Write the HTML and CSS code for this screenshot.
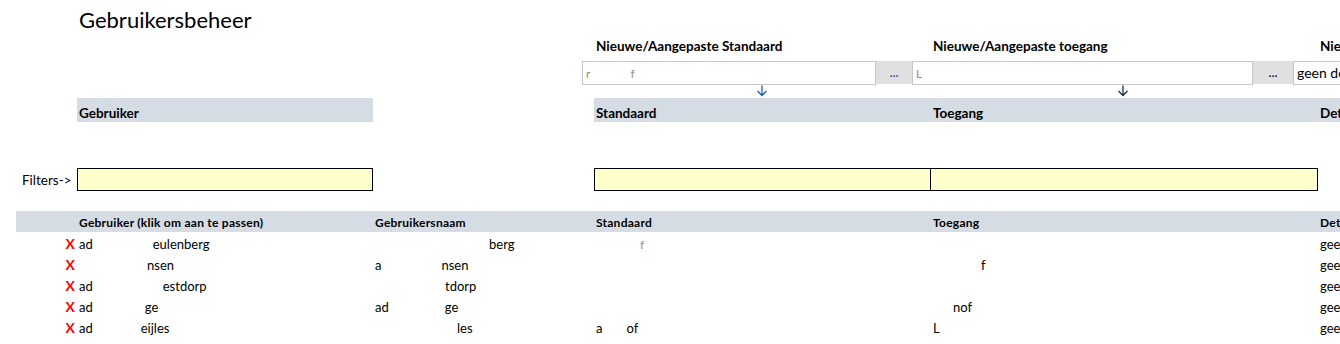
FILE: index.html
```html
<!DOCTYPE html>
<html lang="nl">
<head>
    <meta charset="UTF-8">
    <meta name="viewport" content="width=device-width, initial-scale=1.0">
    <title>Gebruikersbeheer</title>
    <link rel="stylesheet" href="styles.css">
</head>
<body>
    <div class="sheet">
        <div class="title-row">
            <h1 class="title">Gebruikersbeheer</h1>
        </div>

        <div class="grid labels">
            <div class="c-d">Nieuwe/Aangepaste Standaard</div>
            <div class="c-e">Nieuwe/Aangepaste toegang</div>
            <div class="c-f">Nieuwe/Aangepaste details</div>
        </div>

        <div class="pickers">
            <div class="field field-std"><span class="frag">r</span><span class="gap-l"></span><span class="frag">f</span></div>
            <div class="dots blue">...</div>
            <div class="field field-acc"><span class="frag">L</span></div>
            <div class="dots">...</div>
            <div class="field field-det">geen details</div>
        </div>

        <div class="arrows">
            <svg class="arrow arrow-std" width="12" height="12" viewBox="0 0 12 12">
                <path d="M6 0.5V10.5M1.5 6L6 10.5L10.5 6" fill="none" stroke="#1f5fb0" stroke-width="1.3"/>
            </svg>
            <svg class="arrow arrow-acc" width="12" height="12" viewBox="0 0 12 12">
                <path d="M6 0.5V10.5M1.5 6L6 10.5L10.5 6" fill="none" stroke="#203040" stroke-width="1.3"/>
            </svg>
        </div>

        <div class="grid band-row">
            <div class="c-b band">Gebruiker</div>
            <div class="c-c"></div>
            <div class="c-d band">Standaard</div>
            <div class="c-e band">Toegang</div>
            <div class="c-f band">Details</div>
        </div>

        <div class="grid filters">
            <div class="c-a filter-label">Filters-&gt;</div>
            <div class="c-b box"></div>
            <div class="c-c"></div>
            <div class="c-d box"></div>
            <div class="c-e box box-join"></div>
        </div>

        <div class="grid head">
            <div class="c-a"></div>
            <div class="c-b">Gebruiker (klik om aan te passen)</div>
            <div class="c-c">Gebruikersnaam</div>
            <div class="c-d">Standaard</div>
            <div class="c-e">Toegang</div>
            <div class="c-f">Details</div>
        </div>

        <div class="grid data">
            <div class="c-a del">X</div>
            <div class="c-b">ad<span class="gap-60"></span>eulenberg</div>
            <div class="c-c"><span class="gap-114"></span>berg</div>
            <div class="c-d"><span class="gap-44"></span><span class="frag">f</span></div>
            <div class="c-e"></div>
            <div class="c-f">geen</div>
        </div>
        <div class="grid data">
            <div class="c-a del">X</div>
            <div class="c-b"><span class="gap-68"></span>nsen</div>
            <div class="c-c">a<span class="gap-60"></span>nsen</div>
            <div class="c-d"></div>
            <div class="c-e"><span class="gap-48"></span>f</div>
            <div class="c-f">geen</div>
        </div>
        <div class="grid data">
            <div class="c-a del">X</div>
            <div class="c-b">ad<span class="gap-70"></span>estdorp</div>
            <div class="c-c"><span class="gap-70"></span>tdorp</div>
            <div class="c-d"></div>
            <div class="c-e"></div>
            <div class="c-f">geen</div>
        </div>
        <div class="grid data">
            <div class="c-a del">X</div>
            <div class="c-b">ad<span class="gap-52"></span>ge</div>
            <div class="c-c">ad<span class="gap-56"></span>ge</div>
            <div class="c-d"></div>
            <div class="c-e"><span class="gap-20"></span>nof</div>
            <div class="c-f">geen</div>
        </div>
        <div class="grid data">
            <div class="c-a del">X</div>
            <div class="c-b">ad<span class="gap-48"></span>eijles</div>
            <div class="c-c"><span class="gap-82"></span>les</div>
            <div class="c-d">a<span class="gap-24"></span>of</div>
            <div class="c-e">L</div>
            <div class="c-f">geen</div>
        </div>
    </div>
</body>
</html>
```

FILE: styles.css
```css
body {
    margin: 0;
    background-color: #ffffff;
    font-family: Lato, "Liberation Sans", sans-serif;
    color: #000000;
}

.sheet {
    width: 1340px;
    height: 344px;
    overflow: hidden;
}

/* kolommen zoals in het werkblad */
.grid {
    display: grid;
    grid-template-columns: 77px 296px 221px 337px 387px 300px;
    white-space: nowrap;
}

.grid > div {
    overflow: hidden;
}

.c-a { grid-column: 1; }
.c-b { grid-column: 2; }
.c-c { grid-column: 3; }
.c-d { grid-column: 4; }
.c-e { grid-column: 5; }
.c-f { grid-column: 6; }

.title-row {
    height: 36px;
    padding-left: 79px;
}

.title {
    margin: 0;
    padding-top: 6px;
    font-size: 22px;
    font-weight: normal;
    line-height: 28px;
}

.labels {
    height: 25px;
    font-size: 13.5px;
    font-weight: bold;
    line-height: 20px;
}

.labels > div {
    padding-left: 2px;
}

/* invoervelden met ... knoppen */
.pickers {
    display: flex;
    height: 24px;
    padding-left: 582px;
    font-size: 14px;
}

.pickers > div {
    flex-shrink: 0;
}

.field {
    box-sizing: border-box;
    height: 24px;
    border: 1px solid #c6c6c6;
    padding-left: 3px;
    line-height: 21px;
    white-space: nowrap;
    overflow: hidden;
}

.field-std { width: 294px; }
.field-acc { width: 341px; }
.field-det { width: 200px; }

.dots {
    width: 36px;
    height: 23px;
    background-color: #e0e0e0;
    text-align: center;
    line-height: 22px;
    font-size: 13px;
}

.dots.blue {
    color: #1f3c88;
}

.field-acc + .dots {
    width: 40px;
}

.frag {
    color: #a08a80;
    font-size: 12px;
}

.arrows {
    position: relative;
    height: 13px;
}

.arrow {
    position: absolute;
    top: 0;
}

.arrow-std { left: 756px; }
.arrow-acc { left: 1117px; }

.band-row {
    height: 24px;
    font-size: 13.5px;
    font-weight: bold;
    line-height: 31px;
}

.band {
    background-color: #d6dce4;
    padding-left: 2px;
}

.filters {
    height: 23px;
    margin-top: 46px;
    font-size: 13.5px;
}

.filter-label {
    padding-left: 22px;
    line-height: 24px;
}

.box {
    box-sizing: border-box;
    background-color: #ffffcc;
    border: 1px solid #000000;
}

.box-join {
    border-left: none;
}

.head {
    height: 21px;
    margin-top: 20px;
    margin-left: 16px;
    grid-template-columns: 61px 296px 221px 337px 387px 300px;
    background-color: #d6dce4;
    font-size: 12px;
    letter-spacing: 0.25px;
    font-weight: bold;
    line-height: 24px;
}

.head > div {
    padding-left: 2px;
}

.data {
    height: 21px;
    font-size: 13px;
    line-height: 24px;
}

.data > div {
    padding-left: 2px;
}

.del {
    text-align: right;
    padding-right: 2px;
    color: #ff0000;
    font-weight: bold;
    font-size: 14px;
}

/* weggepoetste stukken tekst */
.gap-l { display: inline-block; width: 40px; }
.gap-20 { display: inline-block; width: 20px; }
.gap-24 { display: inline-block; width: 24px; }
.gap-44 { display: inline-block; width: 44px; }
.gap-48 { display: inline-block; width: 48px; }
.gap-52 { display: inline-block; width: 52px; }
.gap-56 { display: inline-block; width: 56px; }
.gap-60 { display: inline-block; width: 60px; }
.gap-68 { display: inline-block; width: 68px; }
.gap-70 { display: inline-block; width: 70px; }
.gap-82 { display: inline-block; width: 82px; }
.gap-114 { display: inline-block; width: 114px; }
```
